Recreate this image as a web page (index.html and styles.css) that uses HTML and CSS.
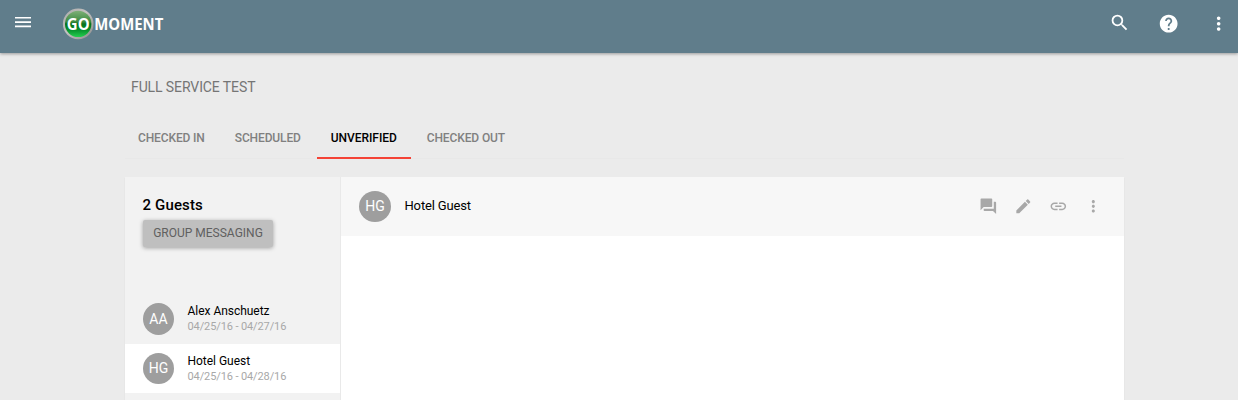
FILE: index.html
```html
<!DOCTYPE html>
<html lang="en">
<head>
<meta charset="utf-8">
<title>Go Moment</title>
<link rel="stylesheet" href="styles.css">
</head>
<body>
<header class="topbar">
  <svg class="icon menu" viewBox="0 0 16 11"><path d="M0 0h16v1.500H0zM0 4.300h16v1.700H0zM0 8.500h16v1.700H0z"/></svg>
  <svg class="logo" viewBox="0 0 110 34" role="img" aria-label="Go Moment">
    <defs>
      <linearGradient id="rim" x1="0" y1="0" x2="1" y2="1"><stop offset="0" stop-color="#a9a9a9"/><stop offset=".45" stop-color="#c4c2c1"/><stop offset="1" stop-color="#8b8b8b"/></linearGradient>
      <linearGradient id="ball" x1="0" y1="0" x2="0" y2="1"><stop offset="0" stop-color="#7fb078"/><stop offset=".42" stop-color="#3c8a40"/><stop offset=".5" stop-color="#08701c"/><stop offset=".72" stop-color="#07902c"/><stop offset="1" stop-color="#24cf50"/></linearGradient>
    </defs>
    <circle cx="16.200" cy="16.900" r="15.300" fill="url(#rim)"/>
    <circle cx="16.200" cy="16.900" r="13.200" fill="url(#ball)"/>
    <text class="logo-text" x="4.800" y="23" textLength="22.800" lengthAdjust="spacingAndGlyphs">GO</text>
    <text class="logo-text" x="32.300" y="23" textLength="69" lengthAdjust="spacingAndGlyphs">MOMENT</text>
  </svg>
  <nav class="actions">
    <svg class="icon large search" viewBox="0 0 24 24"><path d="M15.500 14h-.79l-.28-.27A6.471 6.471 0 0 0 16 9.500 6.500 6.500 0 1 0 9.500 16c1.610 0 3.090-.59 4.230-1.570l.27.28v.79l5 4.990L20.490 19l-4.990-5zm-6 0C7.010 14 5 11.990 5 9.500S7.010 5 9.500 5 14 7.010 14 9.500 11.990 14 9.500 14z"/></svg>
    <svg class="icon large" viewBox="0 0 24 24"><path d="M12 2C6.480 2 2 6.480 2 12s4.480 10 10 10 10-4.480 10-10S17.520 2 12 2zm1 17h-2v-2h2v2zm2.070-7.750l-.9.92C13.450 12.900 13 13.500 13 15h-2v-.5c0-1.100.45-2.100 1.170-2.830l1.240-1.260c.37-.36.59-.86.59-1.410 0-1.100-.9-2-2-2s-2 .9-2 2H8c0-2.210 1.790-4 4-4s4 1.790 4 4c0 .88-.36 1.680-.93 2.250z"/></svg>
    <svg class="icon large" viewBox="0 0 24 24"><path d="M12 8c1.100 0 2-.9 2-2s-.9-2-2-2-2 .9-2 2 .9 2 2 2zm0 2c-1.100 0-2 .9-2 2s.9 2 2 2 2-.9 2-2-.9-2-2-2zm0 6c-1.100 0-2 .9-2 2s.9 2 2 2 2-.9 2-2-.9-2-2-2z"/></svg>
  </nav>
</header>
<main class="page">
  <h1 class="title">FULL SERVICE TEST</h1>
  <nav class="tabs">
    <a class="tab in">CHECKED IN</a>
    <a class="tab scheduled">SCHEDULED</a>
    <a class="tab active">UNVERIFIED</a>
    <a class="tab out">CHECKED OUT</a>
  </nav>
  <section class="panel">
    <aside class="sidebar">
      <h2 class="count">2 Guests</h2>
      <button class="group">GROUP MESSAGING</button>
      <ul class="guests">
        <li class="guest"><span class="avatar">AA</span><div><div class="name">Alex Anschuetz</div><div class="dates">04/25/16 - 04/27/16</div></div></li>
        <li class="guest selected"><span class="avatar">HG</span><div><div class="name">Hotel Guest</div><div class="dates">04/25/16 - 04/28/16</div></div></li>
      </ul>
    </aside>
    <div class="detail">
      <div class="detail-head">
        <span class="avatar">HG</span>
        <span class="detail-name">Hotel Guest</span>
        <div class="tools">
          <svg class="icon small" viewBox="0 0 24 24"><path d="M21 6h-2v9H6v2c0 .55.45 1 1 1h11l4 4V7c0-.55-.45-1-1-1zm-4 6V3c0-.55-.45-1-1-1H3c-.55 0-1 .45-1 1v14l4-4h10c.55 0 1-.45 1-1z"/></svg>
          <svg class="icon small" viewBox="0 0 24 24"><path d="M3 17.250V21h3.750L17.810 9.940l-3.750-3.750L3 17.250zM20.710 7.040a1 1 0 0 0 0-1.410l-2.340-2.340a1 1 0 0 0-1.410 0l-1.830 1.830 3.750 3.750 1.830-1.830z"/></svg>
          <svg class="icon small" viewBox="0 0 24 24"><path d="M3.900 12c0-1.710 1.390-3.100 3.100-3.100h4V7H7c-2.760 0-5 2.240-5 5s2.240 5 5 5h4v-1.900H7c-1.710 0-3.100-1.390-3.100-3.100zM8 13h8v-2H8v2zm9-6h-4v1.900h4c1.710 0 3.100 1.390 3.100 3.100s-1.390 3.100-3.100 3.100h-4V17h4c2.760 0 5-2.240 5-5s-2.240-5-5-5z"/></svg>
          <svg class="icon small" viewBox="0 0 24 24"><path d="M12 8c1.100 0 2-.9 2-2s-.9-2-2-2-2 .9-2 2 .9 2 2 2zm0 2c-1.100 0-2 .9-2 2s.9 2 2 2 2-.9 2-2-.9-2-2-2zm0 6c-1.100 0-2 .9-2 2s.9 2 2 2 2-.9 2-2-.9-2-2-2z"/></svg>
        </div>
      </div>
    </div>
  </section>
</main>
</body>
</html>
```
FILE: styles.css
```css
* { box-sizing: border-box; }
body { margin: 0; height: 400px; overflow: hidden; background: #ebebeb; font-family: Roboto, sans-serif; display: flex; flex-direction: column; }
.topbar { flex: none; height: 53px; background: #607d8b; box-shadow: 0 1px 3px rgba(0,0,0,.35); display: flex; padding-left: 15px; }
.icon { display: block; fill: currentColor; flex: none; }
.menu { width: 16px; height: 11px; margin-top: 17px; color: #fff; }
.logo { width: 110px; height: 34px; margin: 7px 0 0 31px; overflow: visible; }
.logo-text { font: bold 16.500px "Open Sans", sans-serif; fill: #fff; }
.actions { margin-left: auto; display: flex; color: #fff; gap: 28.400px; padding: 12.600px 8.700px 0 0; }
.large { width: 21.330px; height: 21.330px; }
.search { margin-top: -.3px; }
.page { width: 999px; margin-left: 125px; flex: 1; display: flex; flex-direction: column; min-height: 0; }
.title { margin: 25px 0 0 6px; font-weight: 400; font-size: 14px; line-height: 18px; letter-spacing: -.1px; color: #757575; }
.tabs { display: flex; height: 42px; margin-top: 21px; border-bottom: 1px solid #e8e8e8; gap: 2px; }
.tab { height: 42px; padding: 12px 14px 0; font-size: 12px; line-height: 18px; font-weight: 500; letter-spacing: -.13px; color: #808080; white-space: nowrap; }
.tab.in { padding-left: 13px; }
.tab.active { width: 94px; letter-spacing: -.05px; color: #000; border-bottom: 2px solid #f44336; }
.panel { margin-top: 18px; flex: 1; display: flex; box-shadow: 0 1px 1px rgba(0,0,0,.1); }
.sidebar { width: 216px; background: #f2f2f2; border-right: 1px solid #e9e9e9; }
.count { margin: 18px 0 0 17.500px; font-size: 15px; line-height: 20px; font-weight: 500; letter-spacing: .15px; color: #000; }
.group { display: block; width: 130px; height: 27px; margin: 5px 0 0 18px; padding: 0 0 2px; border: 0; border-radius: 2px; background: #bfbfbf; box-shadow: 0 1px 4px rgba(0,0,0,.35); font: 400 12px Roboto, sans-serif; color: #606060; }
.guests { list-style: none; margin: 47px 0 0; padding: 0; }
.guest { height: 50px; display: flex; padding: 9px 0 0 18px; gap: 13.500px; }
.guest.selected { height: 49px; background: #fff; }
.avatar { flex: none; width: 31px; height: 32px; border-radius: 50%; background: #9e9e9e; color: #fff; font-size: 14px; line-height: 32px; text-align: center; }
.selected .avatar { height: 31px; line-height: 31px; }
.name { font-size: 12px; line-height: 16px; color: #000; letter-spacing: -.03px; }
.dates { font-size: 11px; line-height: 15px; letter-spacing: -.11px; color: #a8a8a8; }
.detail { flex: 1; background: #fff; }
.detail-head { height: 59px; background: #f7f7f7; display: flex; align-items: center; padding: 0 21px 0 18px; }
.detail-head .avatar { height: 31px; width: 32px; line-height: 31px; margin-bottom: 1px; }
.detail-name { margin-left: 13.500px; padding-bottom: 2px; font-size: 13px; letter-spacing: -.15px; color: #000; }
.tools { margin-left: auto; display: flex; gap: 16.600px; color: #a8a8a8; padding-bottom: .5px; }
.small { width: 18.670px; height: 18.670px; }
```
